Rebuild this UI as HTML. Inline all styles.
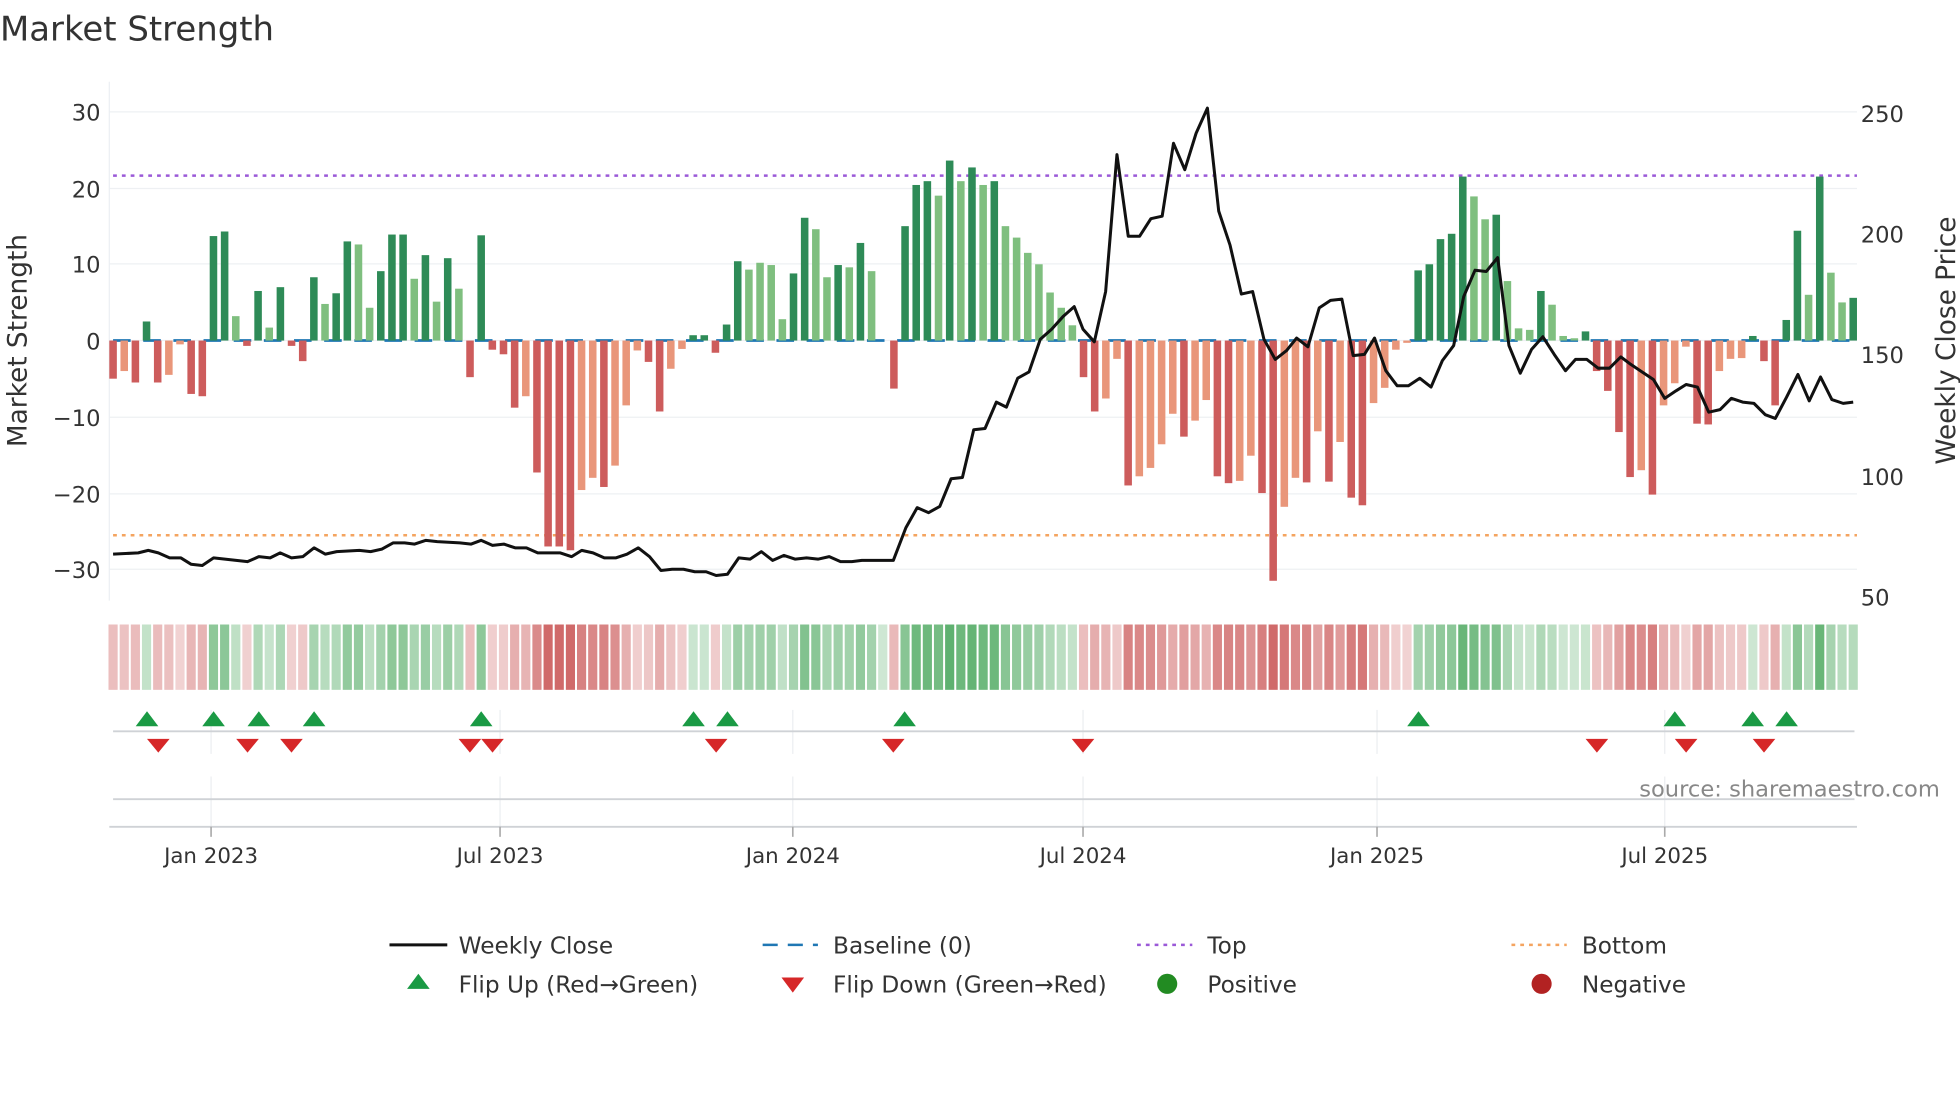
<!DOCTYPE html>
<html><head><meta charset="utf-8"><style>
html,body{margin:0;padding:0;background:#fff;}
svg{display:block;font-family:"DejaVu Sans","Liberation Sans",sans-serif;}
</style></head><body>
<svg id="s" width="1960" height="1102" viewBox="0 0 1560 877" xmlns="http://www.w3.org/2000/svg">
<rect width="1560" height="877" fill="#fff"/>
<text x="0" y="32" font-size="27" fill="#333">Market Strength</text>
<g id="grid"></g>
<line x1="87" y1="65" x2="87" y2="478" stroke="#eceff3" stroke-width="1"/>
<line x1="90" y1="139.7" x2="1478" y2="139.7" stroke="#9b59d8" stroke-width="2" stroke-dasharray="3,4"/>
<line x1="90" y1="426" x2="1478" y2="426" stroke="#f4a460" stroke-width="2" stroke-dasharray="3,4"/>
<line x1="90" y1="271" x2="1478" y2="271" stroke="#1f77b4" stroke-width="2.2" stroke-dasharray="14,10"/>
<g id="bars"></g>
<polyline id="price" fill="none" stroke="#111" stroke-width="2.4" stroke-linejoin="round"/>
<g id="heat"></g>
<line x1="90" y1="582" x2="1476" y2="582" stroke="#cfd2d6" stroke-width="1.5"/>
<line x1="90" y1="636" x2="1476" y2="636" stroke="#cfd2d6" stroke-width="1.5"/>
<line x1="87" y1="658" x2="1478" y2="658" stroke="#cfd2d6" stroke-width="1.5"/>
<g id="marks"></g>
<g id="ticks" font-size="17" fill="#333" text-anchor="middle"></g>
<g font-size="18" fill="#333" text-anchor="end">
<text x="80" y="96">30</text><text x="80" y="157">20</text><text x="80" y="217">10</text><text x="80" y="278">0</text>
<text x="80" y="339">−10</text><text x="80" y="400">−20</text><text x="80" y="460">−30</text>
</g>
<g font-size="18" fill="#333">
<text x="1481" y="97">250</text><text x="1481" y="193">200</text><text x="1481" y="289">150</text><text x="1481" y="386">100</text><text x="1481" y="482">50</text>
</g>
<text transform="translate(21,271) rotate(-90)" font-size="21" fill="#333" text-anchor="middle">Market Strength</text>
<text transform="translate(1556,271) rotate(-90)" font-size="21" fill="#333" text-anchor="middle">Weekly Close Price</text>
<text x="1544" y="634" font-size="18" fill="#888" text-anchor="end">source: sharemaestro.com</text>
<g font-size="18.5" fill="#333">
<line x1="310" y1="752" x2="356" y2="752" stroke="#111" stroke-width="2.4"/>
<text x="365" y="759">Weekly Close</text>
<line x1="607" y1="752" x2="651" y2="752" stroke="#1f77b4" stroke-width="2" stroke-dasharray="12,8"/>
<text x="663" y="759">Baseline (0)</text>
<line x1="905" y1="752" x2="949" y2="752" stroke="#9b59d8" stroke-width="2" stroke-dasharray="3,4"/>
<text x="961" y="759">Top</text>
<line x1="1203" y1="752" x2="1247" y2="752" stroke="#f4a460" stroke-width="2" stroke-dasharray="3,4"/>
<text x="1259" y="759">Bottom</text>
<polygon points="324,787 342,787 333,775" fill="#1a9a44"/>
<text x="365" y="790">Flip Up (Red→Green)</text>
<polygon points="622,778 640,778 631,790" fill="#d62728"/>
<text x="663" y="790">Flip Down (Green→Red)</text>
<circle cx="929" cy="783" r="8" fill="#228b22"/>
<text x="961" y="790">Positive</text>
<circle cx="1227" cy="783" r="8" fill="#b22222"/>
<text x="1259" y="790">Negative</text>
</g>
</svg>
<script>
var NS="http://www.w3.org/2000/svg";
function el(t,a,p){var e=document.createElementNS(NS,t);for(var k in a)e.setAttribute(k,a[k]);document.getElementById(p).appendChild(e);return e;}
// grid
[89,150,210,271,332,393,453].forEach(function(y){el("line",{x1:87,y1:y,x2:1478,y2:y,stroke:"#eef0f3","stroke-width":1},"grid");});
var tx=[[168,"Jan 2023"],[398,"Jul 2023"],[631,"Jan 2024"],[862,"Jul 2024"],[1096,"Jan 2025"],[1325,"Jul 2025"]];
tx.forEach(function(t){
 el("line",{x1:t[0],y1:565,x2:t[0],y2:600,stroke:"#eceef1","stroke-width":1},"grid");
 el("line",{x1:t[0],y1:618,x2:t[0],y2:658,stroke:"#eceef1","stroke-width":1},"grid");
 el("line",{x1:t[0],y1:658,x2:t[0],y2:666,stroke:"#aaa","stroke-width":1.3},"ticks");
 var e=el("text",{x:t[0],y:687},"ticks");e.textContent=t[1];});
// bars: value, D=dark L=light
var b="-5d -4l -5.5d 2.5D -5.5d -4.5l -0.5l -7d -7.3d 13.7D 14.3D 3.2L -0.7d 6.5D 1.7L 7D -0.7d -2.7d 8.3D 4.8L 6.2D 13D 12.6L 4.3L 9.1D 13.9D 13.9D 8.1L 11.2D 5.1L 10.8D 6.8L -4.8d 13.8D -1.2d -1.8d -8.8d -7.3l -17.3d -27d -27d -27.5d -19.6l -18l -19.2d -16.4l -8.5l -1.3l -2.8d -9.3d -3.7l -1.1l 0.7D 0.7D -1.6d 2.1D 10.4D 9.3L 10.2L 9.9L 2.8L 8.8D 16.1D 14.6L 8.3L 9.9D 9.6L 12.8D 9.1L 0L -6.3d 15D 20.4D 20.9D 19L 23.6D 20.9L 22.7D 20.4L 20.9D 15L 13.5L 11.5L 10L 6.3L 4.3L 2L -4.8d -9.3d -7.6l -2.4l -19d -17.8l -16.7l -13.6l -9.6l -12.6d -10.5l -7.8l -17.8d -18.7d -18.4l -15.1l -20d -31.5d -21.8l -18l -18.6d -11.9l -18.5d -13.3l -20.6d -21.6d -8.2l -6.2l -1.2l -0.3l 9.2D 10D 13.3D 14D 21.5D 18.9L 15.9L 16.5D 7.8L 1.6L 1.4L 6.5D 4.7L 0.6L 0.3L 1.2D -4d -6.6d -12d -17.9d -17l -20.2d -8.5l -5.6l -0.8l -10.9d -11d -4l -2.4l -2.3l 0.6D -2.7d -8.5d 2.7D 14.4D 6L 21.5D 8.9L 5L 5.6D".split(" ");
var n=b.length, x0=90, dx=(1475-90)/(n-1);
var col={D:"#2e8b57",L:"#7fbf7f",d:"#cd5c5c",l:"#e9967a"};
b.forEach(function(s,i){
 var v=parseFloat(s),c=s.slice(-1),x=x0+dx*i;
 var y=271-v*6.07;
 if(Math.abs(v)>0.05) el("rect",{x:x-3,y:Math.min(y,271),width:6,height:Math.abs(v*6.07),fill:col[c]},"bars");
 // heat
 var a=Math.min(1,Math.abs(v)/25);
 var f;
 if(v>=0){var t=0.25+0.6*a;f="rgba(60,160,80,"+t.toFixed(2)+")";}
 else{var t=0.25+0.6*a;f="rgba(200,80,80,"+t.toFixed(2)+")";}
 el("rect",{x:x-dx/2+0.8,y:497,width:dx-1.6,height:52,fill:f},"heat");
});
var P="90,441 110,440 118,438 126,440 135,444 144,444 152,449 161,450 170,444 188,446 197,447 206,443 215,444 223,440 232,444 241,443 250,436 259,441 268,439 286,438 295,439 304,437 313,432 322,432 330,433 339,430 348,431 366,432 375,433 383,430 392,434 401,433 410,436 419,436 428,440 437,440 446,440 455,443 463,438 472,440 481,444 490,444 499,441 508,436 517,443 526,454 535,453 544,453 553,455 562,455 570,458 579,457 588,444 597,445 606,439 615,446 624,442 633,445 642,444 651,445 660,443 669,447 678,447 686,446 695,446 711,446 721,420 730,404 739,408 748,403 757,381 766,380 775,342 784,341 793,320 801,324 810,301 819,296 828,270 837,262 846,252 855,244 862,262 871,272 880,232 889,123 898,188 907,188 916,174 925,172 934,114 943,135 952,106 961,86 970,168 979,195 988,234 997,232 1006,270 1015,286 1024,279 1032,269 1041,276 1050,245 1059,239 1068,238 1077,283 1086,282 1094,269 1103,295 1112,307 1121,307 1130,301 1139,308 1148,287 1157,275 1165,236 1174,215 1183,216 1192,205 1201,275 1210,297 1219,278 1228,268 1237,282 1246,295 1254,286 1263,286 1272,293 1281,293 1290,284 1298,290 1307,296 1316,302 1325,317 1334,311 1342,306 1351,308 1360,328 1369,326 1378,317 1387,320 1396,321 1405,330 1413,333 1422,316 1431,298 1440,319 1449,300 1458,318 1467,321 1475,320";
document.getElementById("price").setAttribute("points",P);
[117,170,206,250,383,552,579,720,1129,1333,1395,1422].forEach(function(x){
 el("polygon",{points:(x-9)+",578 "+(x+9)+",578 "+x+",566",fill:"#1a9a44"},"marks");});
[126,197,232,374,392,570,711,862,1271,1342,1404].forEach(function(x){
 el("polygon",{points:(x-9)+",588 "+(x+9)+",588 "+x+",599",fill:"#d62728"},"marks");});
</script>
</body></html>
